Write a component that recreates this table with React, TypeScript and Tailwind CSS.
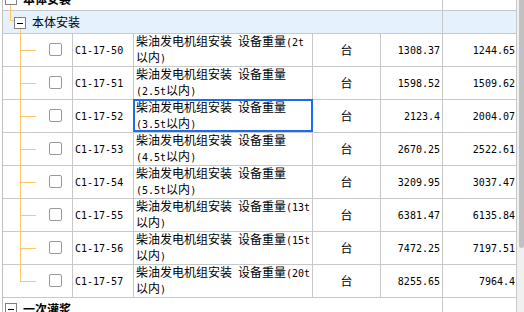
import React from 'react';

type Item = {
  code: string;
  lines: [string, string];
  price: string;
  base: string;
};

const ITEMS: Item[] = [
  { code: 'C1-17-50', lines: ['柴油发电机组安装 设备重量(2t', '以内)'], price: '1308.37', base: '1244.65' },
  { code: 'C1-17-51', lines: ['柴油发电机组安装 设备重量', '(2.5t以内)'], price: '1598.52', base: '1509.62' },
  { code: 'C1-17-52', lines: ['柴油发电机组安装 设备重量', '(3.5t以内)'], price: '2123.4', base: '2004.07' },
  { code: 'C1-17-53', lines: ['柴油发电机组安装 设备重量', '(4.5t以内)'], price: '2670.25', base: '2522.61' },
  { code: 'C1-17-54', lines: ['柴油发电机组安装 设备重量', '(5.5t以内)'], price: '3209.95', base: '3037.47' },
  { code: 'C1-17-55', lines: ['柴油发电机组安装 设备重量(13t', '以内)'], price: '6381.47', base: '6135.84' },
  { code: 'C1-17-56', lines: ['柴油发电机组安装 设备重量(15t', '以内)'], price: '7472.25', base: '7197.51' },
  { code: 'C1-17-57', lines: ['柴油发电机组安装 设备重量(20t', '以内)'], price: '8255.65', base: '7964.4' },
];

const SELECTED = 'C1-17-52';

const cjk = "font-['Noto_Sans_CJK_SC',sans-serif]";
const mono = "font-['DejaVu_Sans_Mono',monospace] text-[10px]";

// half-width runs get the narrow mono face, CJK runs stay at 12px
function Mixed({ text }: { text: string }) {
  const parts = text.split(/([\x00-\x7f]+)/).filter(Boolean);
  return (
    <>
      {parts.map((p, i) =>
        /^[\x00-\x7f]+$/.test(p) ? (
          <span key={i} className={`${mono} whitespace-pre`}>
            {p}
          </span>
        ) : (
          <span key={i}>{p}</span>
        ),
      )}
    </>
  );
}

function MinusBox({ className = '' }: { className?: string }) {
  return (
    <div className={`flex h-[12px] w-[12px] shrink-0 items-center justify-center border border-[#808080] bg-white ${className}`}>
      <div className="h-px w-[6px] bg-black" />
    </div>
  );
}

function GroupRow({ title }: { title: string }) {
  return (
    <div className="flex h-[23px] border-b border-[#c8c8c8]">
      <div className="flex w-[440px] items-center border-r border-[#c8c8c8] pl-[2px]">
        <MinusBox />
        <span className={`${cjk} ml-[6px] text-[12px] font-bold text-black`}>{title}</span>
      </div>
      <div className="w-[74px] border-r border-[#c8c8c8]" />
    </div>
  );
}

function DataRow({ item, last }: { item: Item; last: boolean }) {
  const selected = item.code === SELECTED;
  return (
    <div className="flex h-[33px] border-b border-[#c8c8c8] text-black">
      <div className="relative w-[70px] border-r border-[#c8c8c8]">
        <div className={`absolute left-[17px] top-[-1px] w-px bg-[#fdc66b] ${last ? 'h-[18px]' : 'bottom-[-1px]'}`} />
        <div className="absolute left-[17px] top-[16px] h-px w-[16px] bg-[#fdc66b]" />
        <div className="absolute left-[46px] top-[9px] h-[13px] w-[13px] rounded-[2px] border border-[#999] bg-white" />
      </div>
      <div className={`flex w-[61px] items-center border-r border-[#c8c8c8] pl-[2px] ${mono}`}>{item.code}</div>
      <div className={`relative w-[179px] border-r border-[#c8c8c8] pl-[2px] text-[12px] leading-[14px] ${cjk}`}>
        <div className="whitespace-nowrap">
          <Mixed text={item.lines[0]} />
        </div>
        <div className="whitespace-nowrap">
          <Mixed text={item.lines[1]} />
        </div>
        {selected && <div className="absolute bottom-0 left-[-1px] right-[-1px] top-[-1px] border-2 border-[#1a6cf0]" />}
      </div>
      <div className={`flex w-[68px] items-center justify-center border-r border-[#c8c8c8] text-[12px] ${cjk}`}>台</div>
      <div className={`flex w-[62px] items-center justify-end border-r border-[#c8c8c8] pr-[2px] ${mono}`}>{item.price}</div>
      <div className={`flex w-[74px] items-center justify-end border-r border-[#c8c8c8] pr-[1px] ${mono}`}>{item.base}</div>
    </div>
  );
}

export default function App() {
  return (
    <div className="flex h-[312px] w-[524px] overflow-hidden bg-white">
      <div className="ml-[2px] w-[515px] overflow-hidden border-l border-[#c0c0c0]">
        <div className="-mt-[12px]">
          <GroupRow title="本体安装" />

          {/* sub-group header */}
          <div className="flex h-[23px] border-b border-[#c8c8c8] bg-[#e5f2fd]">
            <div className="relative flex w-[440px] items-center border-r border-[#c8c8c8] pl-[11px]">
              <div className="absolute left-[7px] top-[-6px] h-[16px] w-[4px] border-b border-l border-[#fdc66b]" />
              <div className="absolute bottom-[-1px] left-[17px] top-[18px] w-px bg-[#fdc66b]" />
              <MinusBox className="mt-[2px]" />
              <span className={`${cjk} ml-[6px] text-[12px] text-black`}>本体安装</span>
            </div>
            <div className="w-[74px] border-r border-[#c8c8c8]" />
          </div>

          {ITEMS.map((item, i) => (
            <DataRow key={item.code} item={item} last={i === ITEMS.length - 1} />
          ))}

          <GroupRow title="一次灌浆" />
        </div>
      </div>

      {/* scrollbar */}
      <div className="w-[7px] bg-[#f0f0f0] pl-[2px]">
        <div className="h-[248px] w-full rounded-b-[3px] bg-[#c1c1c1]" />
      </div>
    </div>
  );
}
